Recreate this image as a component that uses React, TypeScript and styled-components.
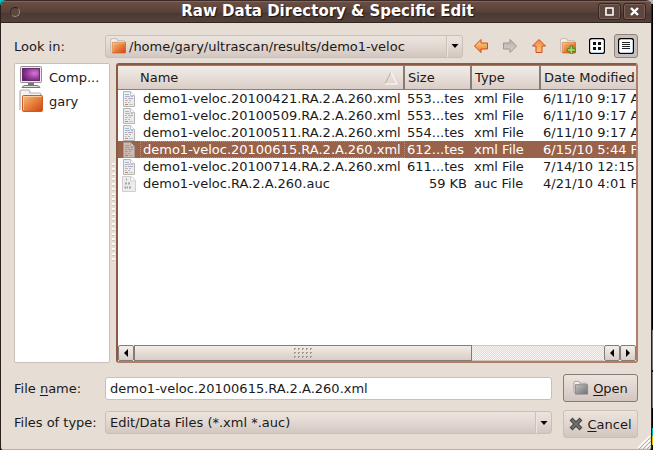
import React from 'react';
import styled, { createGlobalStyle, css } from 'styled-components';

const GlobalStyle = createGlobalStyle`
  * { box-sizing: border-box; }
  html, body, #root { height: 100%; }
  body {
    margin: 0;
    overflow: hidden;
    background: #000;
  }
  body, button, input, select, table {
    font: 13px/17px "DejaVu Sans", sans-serif;
    color: #1a1a1a;
  }
  button, input, select { margin: 0; padding: 0; border: 0; outline: 0; }
`;

const Desktop = styled.div`
  height: 100%;
  padding-right: 1px;
  background:
    linear-gradient(135deg, #00c8c8 5px, transparent 5px),
    linear-gradient(#b4b4b4 4px, #000 4px 330px, #777 330px 370px, #000 370px 372px, #777 372px 408px, #000 408px 428px, #00b4c0 428px 436px, #d8c800 436px 445px, #000 445px);
`;

const Window = styled.main`
  position: relative;
  height: 100%;
  display: flex;
  flex-direction: column;
  background: #e6ddd5;
  border: solid #2a211e;
  border-width: 0 1px;
  border-radius: 6px 6px 3px 3px;
  box-shadow: inset 0 -1px #b9aea6;
  overflow: hidden;
`;

const TitleBar = styled.header`
  height: 23px;
  flex: none;
  display: flex;
  align-items: center;
  gap: 2px;
  padding: 0 5px 0 9px;
  background: linear-gradient(#3a2924 1px, #84655a 1px 2px, #6a4d43 2px, #59423a 12px, #4b3a34 13px, #54403a 22px, #2f2521 22px);
`;

const MenuDot = styled.button`
  width: 10px;
  height: 10px;
  flex: none;
  border-radius: 50%;
  border: 1px solid #a08b82;
  border-top-color: #2a1e1a;
  border-left-color: #3a2a25;
  background: #5d4840;
`;

const Title = styled.h1`
  flex: 1;
  margin: 0;
  padding: 0 0 0 37px;
  text-align: center;
  white-space: nowrap;
  font-size: 15px;
  line-height: 17px;
  color: #fff;
  text-shadow: 1px 1px 1px #1c1411;
`;

const WindowButton = styled.button`
  width: 23px;
  height: 17px;
  display: grid;
  place-items: center;
  border: 1px solid #35261f;
  border-radius: 3px;
  background: #5c463d;
  box-shadow: inset 0 0 0 1px #7b6258;
`;

const Body = styled.form`
  flex: 1;
  min-height: 0;
  display: flex;
  flex-direction: column;
  padding: 11px 13px 12px;
`;

const LookRow = styled.div`
  display: grid;
  grid-template-columns: 91px minmax(0, 1fr) 175px;
  align-items: center;
  height: 23px;
`;

const SelectWrap = styled.div`
  position: relative;
  height: 23px;
`;

const FolderMark = styled.span`
  position: absolute;
  left: 5px;
  top: 3px;
  height: 16px;
  display: grid;
  pointer-events: none;
`;

const DropMark = styled.span`
  position: absolute;
  right: 1px;
  top: 1px;
  bottom: 1px;
  width: 16px;
  display: grid;
  place-items: center;
  border-left: 1px solid #cbc1b9;
  box-shadow: inset 1px 0 #ece5df;
  pointer-events: none;
`;

const Select = styled.select<{ $icon?: boolean }>`
  appearance: none;
  display: block;
  width: 100%;
  height: 100%;
  padding: 0 20px 0 ${p => (p.$icon ? 23 : 4)}px;
  border: 1px solid #cbc0b8;
  border-radius: 3px;
  background: linear-gradient(#ebe4de, #e2d8d1 50%, #d2c8c1);
`;

const Tools = styled.div`
  display: flex;
  justify-content: space-between;
  align-items: center;
  padding-left: 6px;
`;

const ToolButton = styled.button<{ $pressed?: boolean }>`
  width: 24px;
  height: 24px;
  display: grid;
  place-items: center;
  border-radius: 3px;
  background: none;
  ${p => p.$pressed && css`
    background: #c9bfb8;
    border: 1px solid #8d847e;
  `}
`;

const Panes = styled.div`
  flex: 1;
  min-height: 0;
  display: grid;
  grid-template-columns: 96px 6px minmax(0, 1fr);
  margin-top: 6px;
`;

const Places = styled.ul`
  margin: 0;
  padding: 1px 4px;
  list-style: none;
  background: #fff;
  border: 1px solid #cbc0b8;
  border-radius: 2px;
`;

const Place = styled.li`
  height: 24px;
  display: flex;
  align-items: center;
  gap: 6px;
`;

const Splitter = styled.div`
  align-self: center;
  justify-self: center;
  width: 3px;
  height: 100px;
  background: repeating-linear-gradient(#fbf9f7 0 2px, #cfc5bd 2px 3px, #e6ddd5 3px 5px);
`;

const FileFrame = styled.section`
  min-width: 0;
  display: flex;
  flex-direction: column;
  background: #fff;
  border: 2px solid #98624b;
  border-color: #8b5a45 #b17e69 #b17e69 #8b5a45;
  border-radius: 3px;
`;

const TableClip = styled.div`
  flex: 1;
  min-height: 0;
  overflow: hidden;
`;

const FileTable = styled.table`
  width: 720px;
  table-layout: fixed;
  border-collapse: separate;
  border-spacing: 0;
`;

const Col = styled.col<{ $w?: number }>`
  width: ${p => (p.$w ? `${p.$w}px` : 'auto')};
`;

const HeadCell = styled.th<{ $first?: boolean }>`
  height: 25px;
  padding: 0 11px 0 ${p => (p.$first ? 22 : 3)}px;
  text-align: left;
  font-weight: normal;
  background: linear-gradient(#8a817b 1px, #f1ebe6 1px, #e6dcd5 14px, #d9cec7 24px, #8a817b 24px);
  border-right: 2px solid #857c77;
`;

const HeadInner = styled.div`
  display: flex;
  align-items: center;
  justify-content: space-between;
  margin-right: -6px;
`;

const Row = styled.tr<{ $selected?: boolean }>`
  ${p => p.$selected && css`
    background: #98624b;
    color: #fff;
  `}
`;

const Cell = styled.td<{ $right?: boolean }>`
  height: 17px;
  padding: 0 5px 0 2px;
  white-space: nowrap;
  text-align: ${p => (p.$right ? 'right' : 'left')};
`;

const NameCell = styled(Cell)`
  padding: 0 0 0 3px;
`;

const NameInner = styled.div`
  display: flex;
  align-items: center;
  gap: 3px;
`;

const FileLabel = styled.span<{ $focus?: boolean }>`
  flex: 1;
  height: 17px;
  padding-left: 3px;
  outline: ${p => (p.$focus ? '1px dotted #7fa6ae' : 'none')};
  outline-offset: -1px;
`;

const ScrollBar = styled.div`
  height: 16px;
  display: flex;
`;

const ScrollButton = styled.button`
  width: 16px;
  display: grid;
  place-items: center;
  border: 1px solid #857c77;
  border-radius: 2px;
  background: linear-gradient(#f3ede8, #d9cec7);
`;

const Track = styled.div`
  flex: 1;
  display: flex;
  background: repeating-conic-gradient(#e3dbd4 0 25%, #f6f3f0 0 50%) 0 0 / 2px 2px;
  border: solid #cfc5bd;
  border-width: 1px 0;
`;

const Thumb = styled.div`
  width: 72%;
  margin: -1px 0;
  display: grid;
  place-items: center;
  border: 1px solid #857c77;
  background: linear-gradient(#f3ede8, #e6dcd5 50%, #d9cec7);
`;

const Footer = styled.div`
  display: flex;
  gap: 11px;
  margin-top: 11px;
`;

const Fields = styled.div`
  flex: 1;
  min-width: 0;
  display: grid;
  grid-template-columns: 91px minmax(0, 1fr);
  grid-auto-rows: 23px;
  align-items: center;
  row-gap: 11px;
  padding-top: 3px;
`;

const Actions = styled.div`
  width: 75px;
  display: grid;
  gap: 8px;
`;

const Label = styled.label`
  white-space: nowrap;
`;

const Mnemonic = styled.span`
  text-decoration: underline;
  text-underline-offset: 2px;
`;

const FileInput = styled.input`
  width: 100%;
  height: 23px;
  padding: 0 4px;
  background: #fff;
  border: 1px solid #cbc0b8;
  border-radius: 3px;
`;

const ActionButton = styled.button<{ $default?: boolean }>`
  height: 28px;
  display: flex;
  align-items: center;
  justify-content: center;
  gap: 4px;
  border: 1px solid ${p => (p.$default ? '#857c77' : '#cbc0b8')};
  border-radius: 3px;
  background: linear-gradient(#ece4de, #e0d6cf 50%, #d2c7c0);
`;

const Grip = styled.svg`
  position: absolute;
  right: 0;
  bottom: 1px;
`;

type FolderProps = { size: number; children?: React.ReactNode };

const Folder = ({ size, children }: FolderProps) => (
  <svg width={size} height={size} viewBox="0 0 24 24" aria-hidden="true">
    <defs>
      <linearGradient id="folderFill" x1="0" y1="0" x2="1" y2="1">
        <stop offset="0" stopColor="#f3c080" />
        <stop offset="0.5" stopColor="#e8803c" />
        <stop offset="1" stopColor="#cc4412" />
      </linearGradient>
    </defs>
    <path d="M1 21V3q0-2 2-2h6q2 0 2 3h9q2 0 2 2v5" fill="#f4f2f0" stroke="#b5aeaa" strokeWidth="1.200" />
    <rect x="3.500" y="6.500" width="20" height="16" rx="1" fill="url(#folderFill)" stroke="#cf5a20" />
    <path d="M4.500 21V7.500H22.500" fill="none" stroke="#fbd9ad" opacity="0.8" />
    {children}
  </svg>
);

const Computer = () => (
  <svg width="24" height="24" viewBox="0 0 24 24" aria-hidden="true">
    <defs>
      <radialGradient id="screen" cx="0.7" cy="0.4" r="0.8">
        <stop offset="0" stopColor="#d678d2" />
        <stop offset="0.5" stopColor="#9b3fa0" />
        <stop offset="1" stopColor="#5d1c66" />
      </radialGradient>
    </defs>
    <rect x="1.500" y="1.500" width="21" height="16" rx="1" fill="#e8e8e6" stroke="#8e8e8c" />
    <rect x="3.500" y="3.500" width="17" height="12" fill="url(#screen)" stroke="#6c2874" />
    <path d="M9 18h6v2H9z" fill="#777" />
    <path d="M3 22.500q1-2 3-2h12q2 0 3 2z" fill="#e4e4e4" stroke="#777" />
  </svg>
);

const Arrow = ({ turn, gray }: { turn: number; gray?: boolean }) => {
  const id = gray ? 'arrowGray' : turn ? 'arrowUp' : 'arrowBack';
  const up = turn === 90;
  return (
    <svg width="16" height="16" viewBox="0 0 16 16" aria-hidden="true">
      <defs>
        <linearGradient id={id} x1="0" y1="0" x2={up ? '1' : '0'} y2={up ? '0' : '1'}>
          <stop offset="0" stopColor={gray ? '#d6d2ce' : up ? '#ee8a3c' : '#fbd98c'} />
          <stop offset="1" stopColor={gray ? '#b4afaa' : up ? '#fbc878' : '#ee7c2e'} />
        </linearGradient>
      </defs>
      <path
        transform={`rotate(${turn} 8 8)`}
        d="M1.500 8L8 1.500v3.500h6.500v6H8v3.500z"
        fill={`url(#${id})`}
        stroke={gray ? '#9c9792' : '#d4481c'}
        strokeLinejoin="round"
      />
    </svg>
  );
};

const ViewIcon = ({ list }: { list?: boolean }) => (
  <svg width="16" height="16" viewBox="0 0 16 16" aria-hidden="true">
    <rect x="0.500" y="0.500" width="15" height="15" rx="2.500" fill="#fff" stroke="#000" strokeWidth="1.300" />
    <path d="M2 14.500h12M14.500 2v12" stroke="#b4d2ea" fill="none" />
    {list ? (
      <path d="M4 4.500h8M4 6.500h8M4 8.500h8M4 10.500h8" stroke="#222" />
    ) : (
      <path d="M4 4h3v3H4zM9 4h3v3H9zM4 9h3v3H4zM9 9h3v3H9z" fill="#111" />
    )}
  </svg>
);

const Paper = ({ binary, dim }: { binary?: boolean; dim?: boolean }) => (
  <svg width="16" height="16" viewBox="0 0 16 16" aria-hidden="true" opacity={dim ? 0.65 : 1}>
    {binary ? (
      <>
        <path d="M1.500 .5h9l4 4v11h-13z" fill="#ececec" stroke="#cfcfcf" />
        <path d="M9.500 .5v4.500h5" fill="#f8f8f8" stroke="#cfcfcf" />
        <path d="M5 3.500h1M4 7.500h2M7 7.500h2M3.500 11.500h2M6 11.500h1M8 11.500h2" stroke="#a4a4a4" strokeWidth="2" />
      </>
    ) : (
      <>
        <path d="M2.500 .5h7l4 4v11h-11z" fill="#ececec" stroke="#b4b4b4" />
        <path d="M9.500 .5v4h4" fill="#fff" stroke="#c4c4c4" />
        <path d="M4 3.500h4M4 5.500h5M10 5.500h2" stroke="#9dbad0" />
        <path d="M4 7.500h2M7 7.500h5" stroke="#c3a0c8" />
        <path d="M4 9.500h3M8 9.500h2" stroke="#a8c4a2" />
        <path d="M4 11.500h2M7 11.500h2" stroke="#b4bcc4" />
        <path d="M4 13.500h3" stroke="#dc7a74" />
        <path d="M8 13.500h4" stroke="#c4c4c4" />
      </>
    )}
  </svg>
);

const Triangle = ({ d }: { d: string }) => (
  <svg width="8" height="8" viewBox="0 0 8 8" aria-hidden="true"><path d={d} fill="#000" /></svg>
);

const DOWN = 'M.5 2h7L4 6z';
const LEFT = 'M6 0v8L2 4z';
const RIGHT = 'M2 0v8l4-4z';

type FileEntry = { name: string; size: string; type: string; date: string; binary?: boolean };

const files: FileEntry[] = [
  { name: 'demo1-veloc.20100421.RA.2.A.260.xml', size: '553...tes', type: 'xml File', date: '6/11/10 9:17 AM' },
  { name: 'demo1-veloc.20100509.RA.2.A.260.xml', size: '553...tes', type: 'xml File', date: '6/11/10 9:17 AM' },
  { name: 'demo1-veloc.20100511.RA.2.A.260.xml', size: '554...tes', type: 'xml File', date: '6/11/10 9:17 AM' },
  { name: 'demo1-veloc.20100615.RA.2.A.260.xml', size: '612...tes', type: 'xml File', date: '6/15/10 5:44 PM' },
  { name: 'demo1-veloc.20100714.RA.2.A.260.xml', size: '611...tes', type: 'xml File', date: '7/14/10 12:15 PM' },
  { name: 'demo1-veloc.RA.2.A.260.auc', size: '59 KB', type: 'auc File', date: '4/21/10 4:01 PM', binary: true },
];

const gripDots = [0, 1, 2].flatMap(y => [0, 1, 2, 3, 4].map(x => ({ x: x * 4, y: y * 4 })));

export default function App() {
  const [selected, setSelected] = React.useState(files[3].name);
  const [fileName, setFileName] = React.useState(files[3].name);

  const choose = (name: string) => {
    setSelected(name);
    setFileName(name);
  };

  return (
    <Desktop>
      <GlobalStyle />
      <Window>
        <TitleBar>
          <MenuDot type="button" aria-label="Window menu" />
          <Title>Raw Data Directory &amp; Specific Edit</Title>
          <WindowButton type="button" aria-label="Maximize">
            <svg width="9" height="9" viewBox="0 0 9 9"><path d="M1 1h7v7H1z" fill="none" stroke="#fff" strokeWidth="1.600" /></svg>
          </WindowButton>
          <WindowButton type="button" aria-label="Close">
            <svg width="9" height="9" viewBox="0 0 9 9"><path d="M1 1l7 7M8 1L1 8" stroke="#fff" strokeWidth="2.400" /></svg>
          </WindowButton>
        </TitleBar>
        <Body onSubmit={e => e.preventDefault()}>
          <LookRow>
            <Label htmlFor="look">Look in:</Label>
            <SelectWrap>
              <Select id="look" $icon>
                <option>/home/gary/ultrascan/results/demo1-veloc</option>
              </Select>
              <FolderMark><Folder size={16} /></FolderMark>
              <DropMark><Triangle d={DOWN} /></DropMark>
            </SelectWrap>
            <Tools>
              <ToolButton type="button" aria-label="Back"><Arrow turn={0} /></ToolButton>
              <ToolButton type="button" aria-label="Forward"><Arrow turn={180} gray /></ToolButton>
              <ToolButton type="button" aria-label="Parent directory"><Arrow turn={90} /></ToolButton>
              <ToolButton type="button" aria-label="Create new folder">
                <Folder size={16}>
                  <path d="M15 12h4v4h4v4h-4v4h-4v-4h-4v-4h4z" fill="#a4d468" stroke="#4e8a1c" strokeWidth="1.500" />
                </Folder>
              </ToolButton>
              <ToolButton type="button" aria-label="List view"><ViewIcon /></ToolButton>
              <ToolButton type="button" aria-label="Detail view" aria-pressed="true" $pressed><ViewIcon list /></ToolButton>
            </Tools>
          </LookRow>
          <Panes>
            <Places>
              <Place><Computer />Comp...</Place>
              <Place><Folder size={24} />gary</Place>
            </Places>
            <Splitter />
            <FileFrame>
              <TableClip>
                <FileTable>
                  <colgroup><Col $w={287} /><Col $w={67} /><Col $w={69} /><Col /></colgroup>
                  <thead>
                    <tr>
                      <HeadCell $first>
                        <HeadInner>
                          Name
                          <svg width="14" height="14" viewBox="0 0 14 14" aria-hidden="true">
                            <path d="M7 1L1 13" stroke="#b9aea6" />
                            <path d="M7 1l6 12H1" stroke="#fff" fill="none" />
                          </svg>
                        </HeadInner>
                      </HeadCell>
                      <HeadCell>Size</HeadCell>
                      <HeadCell>Type</HeadCell>
                      <HeadCell>Date Modified</HeadCell>
                    </tr>
                  </thead>
                  <tbody>
                    {files.map(f => {
                      const on = f.name === selected;
                      return (
                        <Row key={f.name} $selected={on} onClick={() => choose(f.name)}>
                          <NameCell>
                            <NameInner>
                              <Paper binary={f.binary} dim={on} />
                              <FileLabel $focus={on}>{f.name}</FileLabel>
                            </NameInner>
                          </NameCell>
                          <Cell $right={f.binary}>{f.size}</Cell>
                          <Cell>{f.type}</Cell>
                          <Cell>{f.date}</Cell>
                        </Row>
                      );
                    })}
                  </tbody>
                </FileTable>
              </TableClip>
              <ScrollBar>
                <ScrollButton type="button" aria-label="Scroll left"><Triangle d={LEFT} /></ScrollButton>
                <Track>
                  <Thumb>
                    <svg width="19" height="11" viewBox="0 0 19 11" aria-hidden="true">
                      {gripDots.map(d => (
                        <path key={`${d.x}-${d.y}`} d={`M${d.x} ${d.y}h2v1h-1v1h-1z`} fill="#a1978f" />
                      ))}
                    </svg>
                  </Thumb>
                </Track>
                <ScrollButton type="button" aria-label="Scroll back"><Triangle d={LEFT} /></ScrollButton>
                <ScrollButton type="button" aria-label="Scroll right"><Triangle d={RIGHT} /></ScrollButton>
              </ScrollBar>
            </FileFrame>
          </Panes>
          <Footer>
            <Fields>
              <Label htmlFor="name">File <Mnemonic>n</Mnemonic>ame:</Label>
              <FileInput id="name" value={fileName} onChange={e => setFileName(e.target.value)} />
              <Label htmlFor="types">Files of type:</Label>
              <SelectWrap>
                <Select id="types"><option>Edit/Data Files (*.xml *.auc)</option></Select>
                <DropMark><Triangle d={DOWN} /></DropMark>
              </SelectWrap>
            </Fields>
            <Actions>
              <ActionButton type="submit" $default>
                <svg width="16" height="16" viewBox="0 0 17 16" aria-hidden="true">
                  <defs>
                    <linearGradient id="grayFolder" x1="0" y1="0" x2="1" y2="1">
                      <stop offset="0" stopColor="#c4c4c4" />
                      <stop offset="1" stopColor="#6e6e6e" />
                    </linearGradient>
                  </defs>
                  <path d="M1 13V2q0-1 1-1h4q1 0 1 2h7v3" fill="#eee" stroke="#a5a09c" />
                  <path d="M2.500 4.500h13v10h-13z" fill="url(#grayFolder)" stroke="#858585" />
                </svg>
                <span><Mnemonic>O</Mnemonic>pen</span>
              </ActionButton>
              <ActionButton type="button">
                <svg width="14" height="14" viewBox="0 0 14 14" aria-hidden="true">
                  <path d="M3.500 3.500l7 7M10.500 3.500l-7 7" stroke="#454545" strokeWidth="4.200" strokeLinecap="square" />
                  <path d="M3.500 3.500l7 7M10.500 3.500l-7 7" stroke="#707070" strokeWidth="2.200" strokeLinecap="square" />
                </svg>
                <span><Mnemonic>C</Mnemonic>ancel</span>
              </ActionButton>
            </Actions>
          </Footer>
        </Body>
        <Grip width="14" height="14" viewBox="0 0 14 14" aria-hidden="true">
          <path d="M1 13L13 1M5 13l8-8M9 13l4-4" stroke="#fff" strokeWidth="1.500" />
          <path d="M2 14L14 2M6 14l8-8M10 14l4-4" stroke="#b5aaa2" />
        </Grip>
      </Window>
    </Desktop>
  );
}
